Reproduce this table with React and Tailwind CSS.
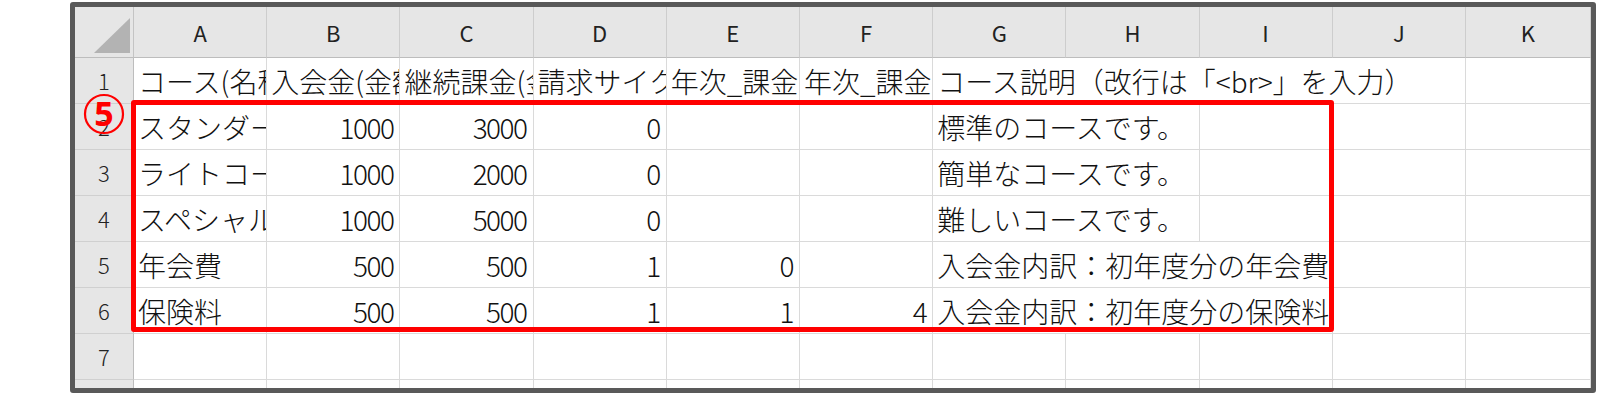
import React from "react";

const columns = ["A", "B", "C", "D", "E", "F", "G", "H", "I", "J", "K"];

// each row: A..F values, then the description cell and how many columns it spills over
const rows = [
  { cells: ["コース(名称)", "入会金(金額)", "継続課金(金額)", "請求サイクル", "年次_課金月", "年次_課金日"], desc: "コース説明（改行は「<br>」を入力）", span: 4 },
  { cells: ["スタンダードコース", 1000, 3000, 0, "", ""], desc: "標準のコースです。", span: 2 },
  { cells: ["ライトコース", 1000, 2000, 0, "", ""], desc: "簡単なコースです。", span: 2 },
  { cells: ["スペシャルコース", 1000, 5000, 0, "", ""], desc: "難しいコースです。", span: 2 },
  { cells: ["年会費", 500, 500, 1, 0, ""], desc: "入会金内訳：初年度分の年会費", span: 3 },
  { cells: ["保険料", 500, 500, 1, 1, 4], desc: "入会金内訳：初年度分の保険料", span: 3 },
  { cells: ["", "", "", "", "", ""], desc: "", span: 1 },
];

const spanClass = {
  1: "col-span-1",
  2: "col-span-2",
  3: "col-span-3",
  4: "col-span-4",
};

const Cell = ({ value, className = "" }) => {
  const isNum = typeof value === "number";
  return (
    <div
      className={`flex items-center overflow-hidden whitespace-nowrap border-r border-b border-[#dadada] bg-white text-[28px] font-light text-[#111] ${
        isNum ? "justify-end pr-[6px] tracking-[-1.5px]" : "pl-[4px]"
      } ${className}`}
    >
      {value}
    </div>
  );
};

const RowHeader = ({ n }) => (
  <div className="flex items-center justify-center border-r border-b border-r-[#bdbdbd] border-b-[#d0d0d0] bg-[#e6e6e6] text-[22px] font-light text-[#222]">
    {n}
  </div>
);

const App = () => {
  return (
    <div className="h-[396px] w-[1598px] bg-white pt-[2px] pl-[70px] font-['Noto_Sans_CJK_JP','Noto_Sans',sans-serif]">
      <div className="relative h-[391px] w-[1526px] overflow-hidden rounded-[3px] border-[5px] border-[#595959] bg-white">
        <div className="grid h-full grid-cols-[59px_repeat(10,133.2px)_1fr] grid-rows-[51px_repeat(7,46px)_1fr]">
          {/* select-all corner */}
          <div className="relative border-r border-b border-r-[#c4c4c4] border-b-[#bdbdbd] bg-[#e6e6e6]">
            <svg className="absolute left-[19px] top-[11px]" width="36" height="35" viewBox="0 0 36 35">
              <polygon points="0,35 36,0 36,35" fill="#b3b3b3" />
            </svg>
          </div>

          {/* column letters */}
          {columns.map((c) => (
            <div
              key={c}
              className="flex items-center justify-center border-r border-b border-r-[#cdcdcd] border-b-[#bdbdbd] bg-[#e6e6e6] text-[22px] text-[#222]"
            >
              {c}
            </div>
          ))}

          {rows.map((row, i) => (
            <React.Fragment key={i}>
              <RowHeader n={i + 1} />
              {row.cells.map((v, j) => (
                <Cell key={j} value={v} />
              ))}
              <Cell value={row.desc} className={spanClass[row.span]} />
              {Array.from({ length: 5 - row.span }).map((_, k) => (
                <Cell key={`e${k}`} value="" />
              ))}
            </React.Fragment>
          ))}

          {/* row 8, cut off by the frame */}
          <div className="border-r border-r-[#bdbdbd] bg-[#e6e6e6]" />
          {columns.map((c) => (
            <div key={`r8${c}`} className="border-r border-[#dadada] bg-white" />
          ))}
        </div>

        {/* highlight around the course rows */}
        <div className="absolute left-[56px] top-[93px] h-[232px] w-[1203px] rounded-[3px] border-[5px] border-[#ff0000]" />

        {/* step marker */}
        <svg className="absolute left-[8px] top-[86px]" width="42" height="42" viewBox="0 0 42 42">
          <circle cx="21" cy="21" r="19" fill="none" stroke="#ff0000" strokeWidth="2.2" />
          <text
            x="21"
            y="33"
            textAnchor="middle"
            fontSize="34"
            fontWeight="700"
            fill="#ff0000"
            fontFamily="'Noto Sans', sans-serif"
          >
            5
          </text>
        </svg>
      </div>
    </div>
  );
};

export default App;
